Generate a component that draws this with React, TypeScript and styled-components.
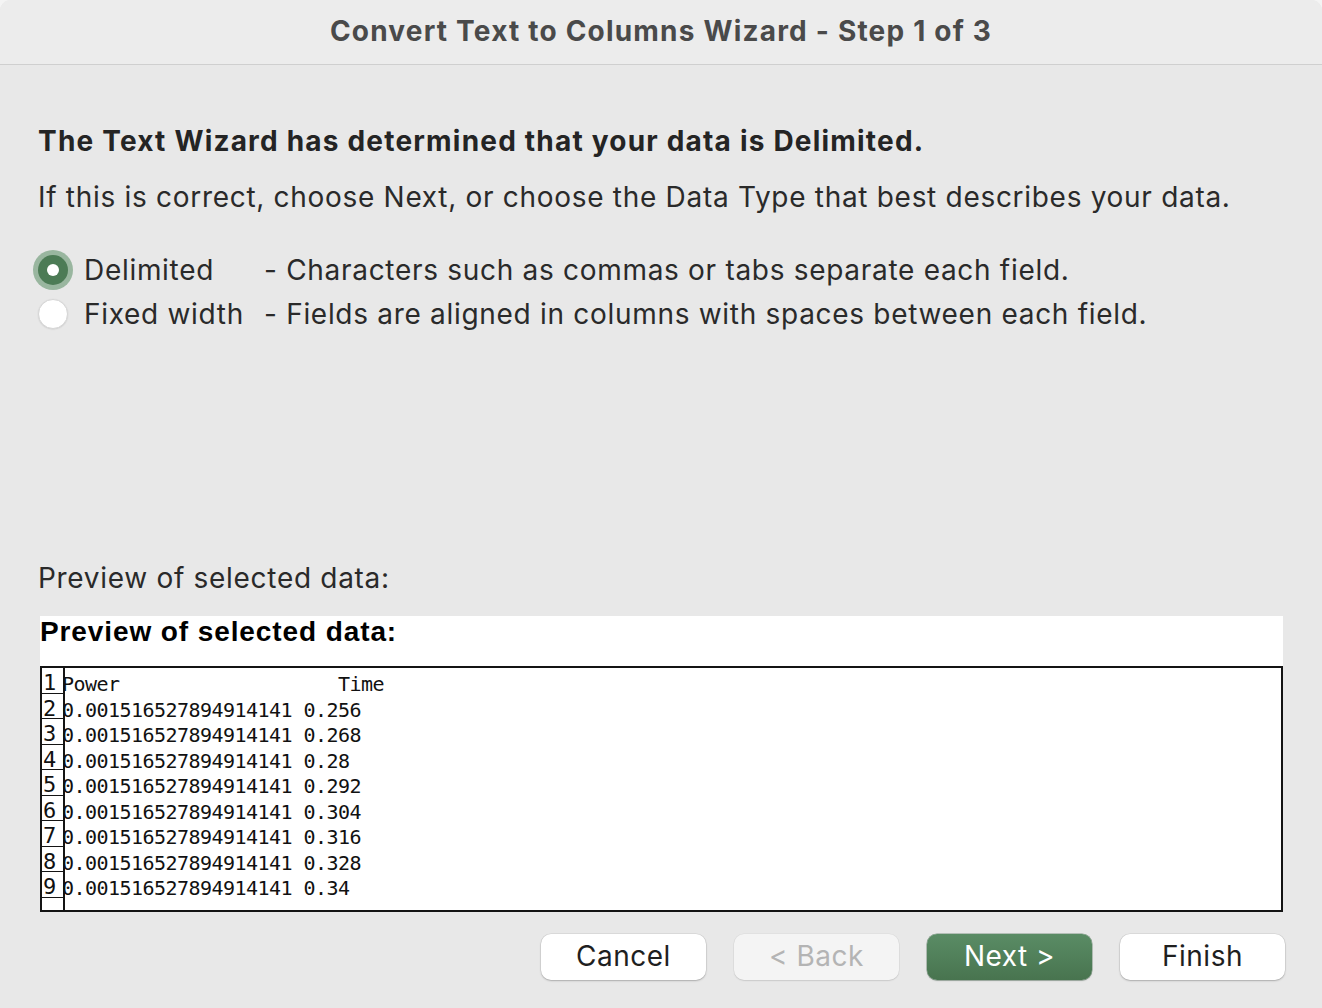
import React from "react";
import styled, { createGlobalStyle } from "styled-components";

const Global = createGlobalStyle`
  html, body { margin: 0; padding: 0; background: #f4f4f4; }
  body { font-family: Inter, "Liberation Sans", Arial, sans-serif; }
  * { box-sizing: border-box; }
`;

const Window = styled.div`
  width: 1322px;
  min-height: 1008px;
  background: #e8e8e8;
  border-radius: 11px 11px 0 0;
  overflow: hidden;
  display: flex;
  flex-direction: column;
`;

const TitleBar = styled.div`
  height: 65px;
  background: #ececec;
  border-bottom: 1.5px solid #cfcfcf;
  display: flex;
  align-items: center;
  justify-content: center;
  font-family: Inter, "Liberation Sans", Arial, sans-serif;
  font-weight: 700;
  font-size: 28px;
  letter-spacing: 1.2px;
  color: #4a4a4a;
  padding-bottom: 3px;
`;

const Content = styled.div`
  padding: 0 39px 0 38px;
  display: flex;
  flex-direction: column;
  color: #262626;
`;

const Heading = styled.div`
  margin-top: 58px;
  font-weight: 700;
  font-size: 28px;
  letter-spacing: 1.2px;
  line-height: 36px;
  color: #242424;
`;

const Para = styled.div<{ $top: number }>`
  margin-top: ${(p) => p.$top}px;
  font-size: 28px;
  letter-spacing: 0.7px;
  line-height: 36px;
  color: #2a2a2a;
`;

const Options = styled.div`
  margin-top: 33px;
  display: grid;
  grid-template-columns: 30px 164px 1fr;
  column-gap: 16px;
  grid-auto-rows: 44px;
  align-items: center;
  font-size: 28px;
  letter-spacing: 0.7px;
  color: #2a2a2a;
`;

const Radio = styled.span<{ $checked?: boolean }>`
  width: 30px;
  height: 30px;
  border-radius: 50%;
  display: flex;
  align-items: center;
  justify-content: center;
  background: ${(p) => (p.$checked ? "#4c7b55" : "#ffffff")};
  border: ${(p) => (p.$checked ? "none" : "1px solid #d6d6d6")};
  box-shadow: ${(p) =>
    p.$checked
      ? "0 0 0 5px rgba(88, 140, 98, 0.55)"
      : "0 0.5px 1.5px rgba(0,0,0,0.12)"};
  &::after {
    content: "";
    display: ${(p) => (p.$checked ? "block" : "none")};
    width: 12px;
    height: 12px;
    border-radius: 50%;
    background: #fff;
  }
`;

const Preview = styled.div`
  margin-top: 20px;
  margin-left: 2px;
  width: 1243px;
  display: flex;
  flex-direction: column;
`;

const PreviewHeader = styled.div`
  height: 50px;
  background: #ffffff;
  font-family: "Liberation Sans", Arial, sans-serif;
  font-weight: 700;
  font-size: 28px;
  letter-spacing: 0.9px;
  line-height: 30px;
  padding: 1px 0 0 0;
  color: #000;
`;

const Table = styled.div`
  height: 246px;
  border: 2px solid #141414;
  background: #fff;
  display: flex;
  flex-direction: column;
  overflow: hidden;
`;

const Row = styled.div<{ $fill?: boolean }>`
  display: flex;
  height: ${(p) => (p.$fill ? "auto" : "25.5px")};
  flex: ${(p) => (p.$fill ? 1 : "none")};
`;

const NumCell = styled.div<{ $last?: boolean }>`
  width: 23px;
  flex: none;
  border-right: 2px solid #141414;
  border-bottom: ${(p) => (p.$last ? "none" : "1.5px solid #141414")};
  font-family: "DejaVu Sans Mono", "Liberation Mono", monospace;
  font-size: 22px;
  line-height: 25px;
  padding: 2px 0 0 1px;
  color: #111;
`;

const DataCell = styled.div`
  font-family: "DejaVu Sans Mono", "Liberation Mono", monospace;
  font-size: 20px;
  letter-spacing: -0.54px;
  line-height: 25px;
  padding-top: 4px;
  white-space: pre;
  color: #111;
  margin-left: -3px;
`;

const Buttons = styled.div`
  margin-top: 22px;
  display: flex;
  justify-content: flex-end;
  gap: 28px;
  margin-right: -2px;
`;

type Variant = "normal" | "disabled" | "primary";

const Button = styled.button<{ $variant: Variant }>`
  width: 165px;
  height: 46px;
  border-radius: 10px;
  border: none;
  font-family: Inter, "Liberation Sans", Arial, sans-serif;
  font-size: 28px;
  letter-spacing: 0.5px;
  padding: 0 0 2px;
  cursor: default;
  background: ${(p) =>
    p.$variant === "primary"
      ? "linear-gradient(#5a8c65, #48744f)"
      : p.$variant === "disabled"
      ? "#f4f4f4"
      : "#ffffff"};
  color: ${(p) =>
    p.$variant === "primary"
      ? "#ffffff"
      : p.$variant === "disabled"
      ? "#b4b4b4"
      : "#1f1f1f"};
  box-shadow: ${(p) =>
    p.$variant === "primary"
      ? "0 0 0 0.5px rgba(60,100,70,0.6), 0 1px 1.5px rgba(0,0,0,0.18)"
      : p.$variant === "disabled"
      ? "0 0 0 0.5px rgba(0,0,0,0.06), 0 1px 1.5px rgba(0,0,0,0.1)"
      : "0 0 0 0.5px rgba(0,0,0,0.1), 0 1px 2px rgba(0,0,0,0.22)"};
`;

const rows = [
  "Power                   Time",
  "0.001516527894914141 0.256",
  "0.001516527894914141 0.268",
  "0.001516527894914141 0.28",
  "0.001516527894914141 0.292",
  "0.001516527894914141 0.304",
  "0.001516527894914141 0.316",
  "0.001516527894914141 0.328",
  "0.001516527894914141 0.34",
];

export default function App() {
  return (
    <>
      <Global />
      <Window>
        <TitleBar>Convert Text to Columns Wizard - Step 1 of 3</TitleBar>
        <Content>
          <Heading>The Text Wizard has determined that your data is Delimited.</Heading>
          <Para $top={20}>
            If this is correct, choose Next, or choose the Data Type that best describes your data.
          </Para>
          <Options>
            <Radio $checked />
            <span>Delimited</span>
            <span>- Characters such as commas or tabs separate each field.</span>
            <Radio />
            <span>Fixed width</span>
            <span>- Fields are aligned in columns with spaces between each field.</span>
          </Options>
          <Para $top={224}>Preview of selected data:</Para>
          <Preview>
            <PreviewHeader>Preview of selected data:</PreviewHeader>
            <Table>
              {rows.map((r, i) => (
                <Row key={i}>
                  <NumCell>{i + 1}</NumCell>
                  <DataCell>{r}</DataCell>
                </Row>
              ))}
              <Row $fill>
                <NumCell $last />
              </Row>
            </Table>
          </Preview>
          <Buttons>
            <Button $variant="normal">Cancel</Button>
            <Button $variant="disabled">&lt; Back</Button>
            <Button $variant="primary">Next &gt;</Button>
            <Button $variant="normal">Finish</Button>
          </Buttons>
        </Content>
      </Window>
    </>
  );
}
